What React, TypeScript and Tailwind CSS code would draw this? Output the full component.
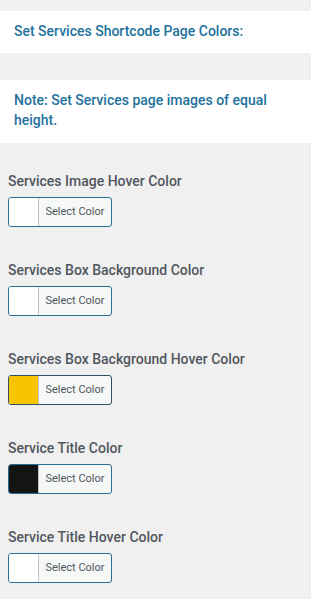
import React from "react";

const fields = [
  { label: "Services Image Hover Color", color: "#ffffff", border: "border-[#2c6e93]" },
  { label: "Services Box Background Color", color: "#ffffff", border: "border-[#2c6e93]" },
  { label: "Services Box Background Hover Color", color: "#f6c500", border: "border-[#33505f]" },
  { label: "Service Title Color", color: "#141414", border: "border-[#2c6e93]" },
  { label: "Service Title Hover Color", color: "#ffffff", border: "border-[#2c6e93]" },
];

const App = () => {
  return (
    <div className="w-[311px] h-[599px] overflow-hidden bg-[#f0f0f0] font-['Roboto',sans-serif]">
      <div className="pt-[11px]">
        <div className="bg-white pl-[14px] pt-[10px] pb-[12px] text-[14px] leading-[20px] font-medium text-[#22729c]">
          Set Services Shortcode Page Colors:
        </div>
        <div className="mt-[27px] bg-white pl-[14px] pr-3 pt-[10px] pb-[13px] text-[14px] leading-[20px] font-medium text-[#22729c]">
          Note: Set Services page images of equal height.
        </div>
      </div>
      <div className="pl-[8px] pt-[28px]">
        {fields.map((f) => (
          <div key={f.label} className="h-[89px]">
            <div className="text-[14px] leading-[20px] text-[#50575e] font-medium">{f.label}</div>
            <button
              className={`mt-[6px] flex h-[30px] w-[104px] overflow-hidden rounded-[3px] border ${f.border} bg-[#f6f7f7]`}
            >
              <span className="h-full w-[30px] border-r border-[#c3c4c7]" style={{ backgroundColor: f.color }} />
              <span className="flex-1 text-center text-[11px] leading-[28px] text-[#50575e]">Select Color</span>
            </button>
          </div>
        ))}
      </div>
    </div>
  );
};

export default App;
